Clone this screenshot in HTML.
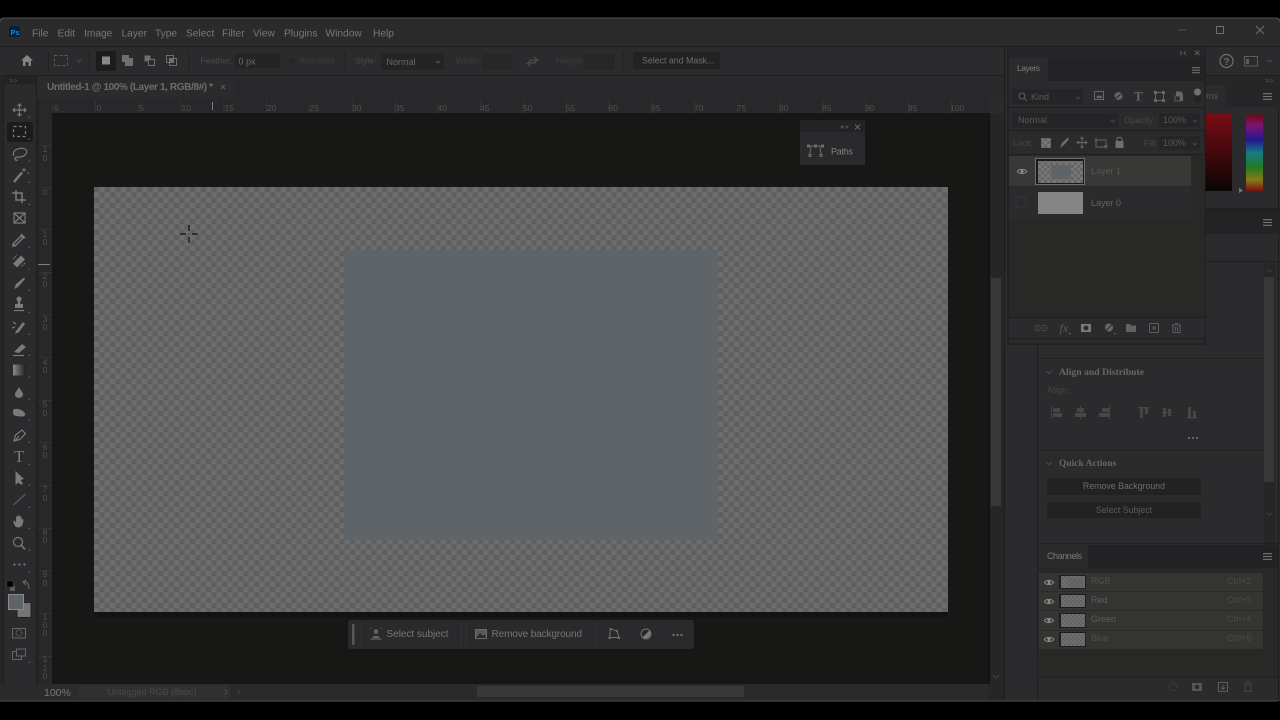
<!DOCTYPE html>
<html><head><meta charset="utf-8"><title>Photoshop</title>
<style>
html,body{margin:0;padding:0;background:#000;width:1280px;height:720px;overflow:hidden}
svg{display:block;filter:blur(.35px)}
text{font-family:"Liberation Sans",sans-serif;font-size:10px;fill:#7f7f7f}
.m{font-size:10.2px;fill:#787878}
.r{fill:#505050;font-size:8.5px}
.i{fill:none;stroke:#7a7a7a;stroke-width:1.2}
.f{fill:#7a7a7a}
</style></head><body>
<svg width="1280" height="720" viewBox="0 0 1280 720" xmlns="http://www.w3.org/2000/svg">
<defs>
<pattern id="ck" width="10.667" height="10.667" patternUnits="userSpaceOnUse" x="94" y="187"><rect width="10.667" height="10.667" fill="#6d6d6d"/><rect width="5.333" height="5.333" fill="#5f5f5f"/><rect x="5.333" y="5.333" width="5.333" height="5.333" fill="#5f5f5f"/></pattern>
<pattern id="ck2" width="6" height="6" patternUnits="userSpaceOnUse"><rect width="6" height="6" fill="#777"/><rect width="3" height="3" fill="#666"/><rect x="3" y="3" width="3" height="3" fill="#666"/></pattern>
<pattern id="ck3" width="4" height="4" patternUnits="userSpaceOnUse"><rect width="4" height="4" fill="#6f6f6f"/><rect width="2" height="2" fill="#636363"/><rect x="2" y="2" width="2" height="2" fill="#636363"/></pattern>
<linearGradient id="red" x1="0" y1="0" x2="0" y2="1"><stop offset="0" stop-color="#7a0c14"/><stop offset="1" stop-color="#0a0505"/></linearGradient>
<linearGradient id="hue" x1="0" y1="0" x2="0" y2="1"><stop offset="0" stop-color="#700a12"/><stop offset=".15" stop-color="#7a1478"/><stop offset=".33" stop-color="#22188a"/><stop offset=".5" stop-color="#1a7a88"/><stop offset=".68" stop-color="#1f7a22"/><stop offset=".85" stop-color="#8a7a18"/><stop offset="1" stop-color="#760c10"/></linearGradient>
<linearGradient id="gr" x1="0" y1="0" x2="1" y2="0"><stop offset="0" stop-color="#8a8a8a"/><stop offset="1" stop-color="#1d1d1d"/></linearGradient>
<symbol id="eye" viewBox="0 0 12 8" overflow="visible"><path d="M.5 4C3 .8 9 .8 11.500 4 9 7.200 3 7.200 .5 4Z" fill="none" stroke="#8a8a8a" stroke-width="1.1"/><circle cx="6" cy="4" r="1.800" fill="#8a8a8a"/></symbol>
<symbol id="ham" viewBox="0 0 9 7" overflow="visible"><path d="M0 .7H9M0 3.500H9M0 6.300H9" stroke="#777" stroke-width="1.100"/></symbol>
</defs>
<rect width="1280" height="720" fill="#000"/>
<rect x="0" y="18" width="1280" height="684" rx="4" fill="#2b2b2d"/>
<path d="M0 22Q0 18 4 18H1276Q1280 18 1280 22" fill="none" stroke="#505052"/>

<!-- title bar -->
<rect x="9" y="26" width="11" height="11" rx="2" fill="#06203c"/><text x="10.500" y="35" style="font-size:7.500px;font-weight:bold;fill:#2f7fd0">Ps</text>
<text class="m" x="32" y="36.500">File</text><text class="m" x="57.500" y="36.500">Edit</text><text class="m" x="84" y="36.500">Image</text><text class="m" x="121.500" y="36.500">Layer</text><text class="m" x="155" y="36.500">Type</text><text class="m" x="186" y="36.500">Select</text><text class="m" x="222" y="36.500">Filter</text><text class="m" x="253" y="36.500">View</text><text class="m" x="284" y="36.500">Plugins</text><text class="m" x="325.500" y="36.500">Window</text><text class="m" x="373" y="36.500">Help</text>
<path d="M1178 30H1186" stroke="#4f4f4f" stroke-width="1"/><rect x="1216.500" y="26.500" width="7" height="7" fill="none" stroke="#6e6e6e"/><path d="M1256 26L1264 34M1264 26L1256 34" stroke="#6e6e6e"/>
<path d="M0 46.500H1280" stroke="#1e1e1f"/>
<path d="M0 75.500H1280" stroke="#1e1e1f"/>

<!-- options bar -->
<path d="M27 55L21 60.500H23V66H25.500V62H28.500V66H31V60.500H33Z" fill="#848484"/>
<path d="M48.500 52V71M89 52V71M189 52V71M345 52V71M623 52V71" stroke="#202021"/>
<rect x="54.500" y="55.500" width="13" height="10" fill="none" stroke="#5a5a5a" stroke-dasharray="3 2"/>
<path d="M77 60L79 62L81 60" fill="none" stroke="#4f4f4f"/>
<rect x="96" y="51" width="20" height="20" rx="1" fill="#1c1c1d"/><rect x="102" y="56.500" width="8" height="8" fill="#888"/>
<path d="M122 55H129V58H133V66H125V62H122Z" fill="#6f6f6f"/>
<rect x="144.500" y="55.500" width="6" height="6" fill="#6f6f6f"/><rect x="148.500" y="59.500" width="6" height="6" fill="#2b2b2d" stroke="#6f6f6f"/>
<rect x="166.500" y="55.500" width="7" height="7" fill="none" stroke="#6f6f6f"/><rect x="169.500" y="58.500" width="7" height="7" fill="none" stroke="#6f6f6f"/><rect x="170" y="59" width="3" height="3" fill="#6f6f6f"/>
<text x="200.500" y="63.500" style="font-size:8.500px;fill:#4a4a4a">Feather:</text>
<rect x="235" y="54" width="45" height="14" fill="#242425"/><text x="238.500" y="64.500" style="font-size:9px;fill:#6e6e6e">0 px</text>
<rect x="289" y="58" width="6" height="6" fill="#262627"/><text x="299.500" y="63.500" style="font-size:8.500px;fill:#3c3c3c">Anti-alias</text>
<text x="355" y="63.500" style="font-size:8.500px;fill:#4a4a4a">Style:</text>
<rect x="381" y="53" width="63" height="17" fill="#242425"/><text x="386.500" y="65" style="font-size:9px;fill:#686868">Normal</text><path d="M436 61L438 63L440 61" fill="none" stroke="#565656"/>
<text x="455.500" y="63.500" style="font-size:8.500px;fill:#3c3c3c">Width:</text><rect x="483.500" y="54.500" width="28" height="14" fill="#272728" stroke="#242422"/>
<path d="M529 60H537M534 57L538 60L534 62M536 63H528M531 61L527 63.500L531 66" fill="none" stroke="#484848" stroke-width="1.300"/>
<text x="556" y="63.500" style="font-size:8.500px;fill:#3c3c3c">Height:</text><rect x="585.500" y="54.500" width="28" height="14" fill="#272728" stroke="#242422"/>
<rect x="633" y="52" width="87" height="17" fill="#222223"/><text x="642" y="63.500" style="font-size:8.800px;fill:#6e6e6e">Select and Mask...</text>

<!-- tab row -->
<rect x="38" y="76" width="970" height="22" fill="#29292b"/>
<rect x="38" y="76" width="196" height="22" fill="#2b2b2d"/>
<text x="47" y="90" style="font-size:10px;font-weight:bold;fill:#6c6c6c" textLength="166">Untitled-1 @ 100% (Layer 1, RGB/8#) *</text>
<path d="M221 85L225 89M225 85L221 89" stroke="#5a5a5a"/>
<rect x="4" y="76" width="32" height="8" fill="#232324"/>
<text x="9" y="83" style="font-size:7px;fill:#555">&gt;&gt;</text>

<!-- rulers -->
<rect x="38" y="98" width="950" height="15" fill="#28282a"/>
<rect x="38" y="98" width="14" height="586" fill="#28282a"/>
<path d="M38 98V684" stroke="#1e1e1f"/>
<path d="M52 112H988" stroke="#464646" stroke-dasharray="1 7.540"/>
<path d="M52.500 104V113M95.500 100V113M138.300 100V113M181 100V113M223.800 100V113M266.600 100V113M309.400 100V113M352.200 100V113M395 100V113M437.800 100V113M480.600 100V113M523.400 100V113M566.200 100V113M609 100V113M651.800 100V113M694.600 100V113M737.400 100V113M780.200 100V113M823 100V113M865.800 100V113M908.600 100V113M951.400 100V113" stroke="#333335"/>
<text class="r" x="54" y="111">5</text><text class="r" x="96.500" y="111">0</text><text class="r" x="139" y="111">5</text><text class="r" x="181.500" y="111">10</text><text class="r" x="224.500" y="111">15</text><text class="r" x="267" y="111">20</text><text class="r" x="309.500" y="111">25</text><text class="r" x="352" y="111">30</text><text class="r" x="395" y="111">35</text><text class="r" x="437.500" y="111">40</text><text class="r" x="480" y="111">45</text><text class="r" x="523" y="111">50</text><text class="r" x="565.500" y="111">55</text><text class="r" x="608.500" y="111">60</text><text class="r" x="651" y="111">65</text><text class="r" x="694" y="111">70</text><text class="r" x="737" y="111">75</text><text class="r" x="779" y="111">80</text><text class="r" x="822" y="111">85</text><text class="r" x="865" y="111">90</text><text class="r" x="908" y="111">95</text><text class="r" x="950" y="111">100</text>
<path d="M212.500 102V110" stroke="#7d7d7d"/>
<path d="M38 264.500H50" stroke="#7d7d7d"/>
<path d="M38 145.500H52M38 187.500H52M38 229.500H52M38 272.500H52M38 314.500H52M38 357.500H52M38 400.500H52M38 442.500H52M38 485.500H52M38 528.500H52M38 570.500H52M38 613.500H52M38 656.500H52" stroke="#333335"/>
<g text-anchor="middle">
<text class="r" x="45" y="152">1</text><text class="r" x="45" y="161">0</text>
<text class="r" x="45" y="195">0</text>
<text class="r" x="45" y="237">1</text><text class="r" x="45" y="245">0</text>
<text class="r" x="45" y="279">2</text><text class="r" x="45" y="287">0</text>
<text class="r" x="45" y="322">3</text><text class="r" x="45" y="330">0</text>
<text class="r" x="45" y="365">4</text><text class="r" x="45" y="373">0</text>
<text class="r" x="45" y="407">5</text><text class="r" x="45" y="416">0</text>
<text class="r" x="45" y="450">6</text><text class="r" x="45" y="458">0</text>
<text class="r" x="45" y="492">7</text><text class="r" x="45" y="501">0</text>
<text class="r" x="45" y="535">8</text><text class="r" x="45" y="543">0</text>
<text class="r" x="45" y="577">9</text><text class="r" x="45" y="586">0</text>
<text class="r" x="45" y="620">1</text><text class="r" x="45" y="628">0</text><text class="r" x="45" y="636">0</text>
<text class="r" x="45" y="662">1</text><text class="r" x="45" y="671">1</text><text class="r" x="45" y="679">0</text>
</g>

<!-- canvas -->
<rect x="52" y="113" width="936" height="571" fill="#171715"/>
<rect x="94" y="187" width="854" height="425" fill="url(#ck)"/>
<rect x="344" y="250" width="374" height="290" fill="#5f6468"/>
<rect x="94" y="612" width="854" height="5" fill="#121214"/>
<!-- cursor -->
<path d="M189 225V231M189 237V243M180 234H186M192 234H198" stroke="#111" stroke-width="1.200"/><rect x="188.500" y="233.500" width="1" height="1" fill="#222"/>

<!-- contextual task bar -->
<rect x="348" y="620" width="346" height="29" rx="3" fill="#2a2a2d"/>
<rect x="352" y="624" width="2.500" height="21" rx="1" fill="#585858"/>
<path d="M361 622V646M461 622V646M466 622V646M596 622V646" stroke="#343437"/>
<circle cx="376" cy="631.500" r="2.300" fill="#666"/><path d="M372 638.500C372 635 380 635 380 638.500Z" fill="#666"/><path d="M371 629V628H372M381 629V628H380M371 638V639.500H381V638" fill="none" stroke="#5c5c5c" stroke-width=".7"/>
<text x="386.500" y="637" style="font-size:10px;fill:#767676" textLength="62">Select subject</text>
<rect x="475.500" y="629.500" width="11" height="9" fill="#5a5a5a" stroke="#6a6a6a"/><path d="M476 638L480 633L483 636L485 634L486 638Z" fill="#2a2a2d"/>
<text x="491.500" y="637" style="font-size:10px;fill:#767676" textLength="90.500">Remove background</text>
<path d="M610.500 629L617 631L619 637.500L609.500 637.500Z" fill="none" stroke="#6e6e6e"/><g fill="#6e6e6e"><rect x="609.500" y="628" width="2" height="2"/><rect x="616" y="630" width="2" height="2"/><rect x="608.500" y="637" width="2" height="2"/><rect x="618" y="637" width="2" height="2"/></g>
<circle cx="646" cy="634" r="5" fill="#2a2a2d" stroke="#6e6e6e"/><path d="M642.500 637.500L649.500 630.500A5 5 0 0 1 642.500 637.500Z" fill="#7a7a7a"/>
<circle cx="673.500" cy="635" r="1.200" fill="#6e6e6e"/><circle cx="677.500" cy="635" r="1.200" fill="#6e6e6e"/><circle cx="681.500" cy="635" r="1.200" fill="#6e6e6e"/>

<!-- paths mini panel -->
<rect x="800" y="120" width="65" height="45" fill="#2a2a2c"/><rect x="800" y="120" width="65" height="12" fill="#232325"/>
<path d="M841 127H845M843 125.500L841 127L843 128.500M846 125.500L848 127L846 128.500" fill="none" stroke="#666" stroke-width=".8" opacity=".8"/>
<path d="M855 124.500L860 129.500M860 124.500L855 129.500" stroke="#666"/>
<path d="M808.500 146H822.500M811 147L809.500 155M820 147L821 155" fill="none" stroke="#6c6c6c"/><rect x="807" y="144.500" width="3" height="3" fill="#6c6c6c"/><rect x="814" y="144.500" width="3" height="3" fill="#6c6c6c"/><rect x="821" y="144.500" width="3" height="3" fill="#6c6c6c"/><rect x="809" y="154.500" width="2" height="2" fill="none" stroke="#6c6c6c"/><rect x="820" y="154.500" width="2" height="2" fill="none" stroke="#6c6c6c"/>
<text x="831" y="154.500" style="font-size:9px;fill:#808080" textLength="22">Paths</text>

<!-- tool bar -->
<rect x="0" y="75" width="4" height="627" fill="#262627"/>
<path d="M3.500 78V700M36.500 76V684" stroke="#1f1f20"/>
<rect x="7" y="122" width="26" height="20" rx="1" fill="#1c1c1d"/>
<path d="M13 110H26M19.500 104V116M17.500 106L19.500 104L21.500 106M17.500 114L19.500 116L21.500 114M15 108L13 110L15 112M24 108L26 110L24 112" class="i"/>
<rect x="13.500" y="126.500" width="12" height="10" style="stroke-dasharray:3 2.500" class="i"/>
<path d="M14 156C11 150 20 147 25 149C29 151 26 157 19 157C17 157 15 157 15 159C15 161 17 160 18 160" class="i"/>
<path d="M14 182L22 172.500" class="i" style="stroke-width:2.500"/><path d="M24 168V172M22 170H26M27 173H29" class="i" style="stroke-width:.9"/>
<path d="M16 190V200H26M12 193H22V203" class="i" style="stroke-width:1.500"/>
<path d="M14 213H25V223H14ZM14 213L25 223M25 213L14 223" class="i"/>
<path d="M14 245L13 246V244L21 236L23 238L15 246ZM21 234L25 238" class="i" style="stroke-width:1.400"/>
<path d="M15 265.500L23 257.500" class="i" style="stroke-width:5.500"/><path d="M13 259L17 255M25 263L21 267" class="i" style="stroke-dasharray:1.500 1"/>
<path d="M14 289L16 284L24 277.500L25 279L18 287Z" class="f"/>
<path d="M19 299V304" class="i" style="stroke-width:2.500"/><path d="M15 304H23V308H15Z" class="f"/><path d="M14 310.500H24" class="i"/><circle cx="19" cy="299" r="2.500" class="f"/>
<path d="M16 331L23 322L25 324L19 332L15 334Z" class="f"/><path d="M13 322L16 324M12 328L15 327" class="i"/>
<path d="M14 352L22 344L26 347L19 353Z" class="f"/><path d="M13 355.500H24" class="i"/>
<rect x="13" y="364.500" width="13" height="11" fill="url(#gr)"/>
<path d="M19 387C21 391 23 392 23 394.500C23 399 15 399 15 394.500C15 392 17 391 19 387Z" class="f"/>
<path d="M13 411C13 408 20 408 24 412C27 415 24 417 21 416.500L16 416C13 415.500 13 413 13 411Z" class="f"/>
<path d="M14 441L15.500 435L22 430L25.500 433.500L20 439.500ZM15 441L19 436" class="i"/>
<text x="14" y="462" style="font-family:'Liberation Serif',serif;font-size:17px;fill:#7a7a7a">T</text>
<path d="M15.500 471V485L18.500 482.500L21 485L23 483.500L20.500 480L24 479Z" class="f"/>
<path d="M13.500 505L25.500 494" class="i" style="stroke:#5a5a5a"/>
<path d="M15 526C13.500 523 13 521 14 520.500C15 520.500 16 523 16 523V517.500C16 516 17.500 516 17.500 517.500V516C18 515 19.500 515 19.500 516V517C20.500 516 21.500 516 21.500 517.500V519.500C22.500 519 23.500 519 23.500 520L23 523C22.500 526 21 527 19 527.500C17 527.500 16 527 15 526Z" class="f"/>
<circle cx="18" cy="542" r="4.500" class="i"/><path d="M21.500 545.500L25 549.500" class="i" style="stroke-width:1.600"/>
<circle cx="14.500" cy="564.500" r="1.100" class="f"/><circle cx="19.500" cy="564.500" r="1.100" class="f"/><circle cx="24.500" cy="564.500" r="1.100" class="f"/>
<g fill="#5c5c5c"><path d="M30 116V118H28ZM30 138V140H28ZM30 160V162H28ZM30 181V183H28ZM30 203V205H28ZM30 246V248H28ZM30 268V270H28ZM30 289V291H28ZM30 311V313H28ZM30 333V335H28ZM30 354V356H28ZM30 376V378H28ZM30 398V400H28ZM30 419V421H28ZM30 441V443H28ZM30 463V465H28ZM30 484V486H28ZM30 506V508H28ZM30 527V529H28ZM30 549V551H28ZM30 571V573H28ZM30 661V663H28Z"/></g>
<rect x="10" y="586" width="5" height="5" fill="#5a5a5a"/><rect x="7" y="581" width="6" height="6" fill="#000" stroke="#444" stroke-width=".5"/>
<path d="M23 582C27 581 29 584 29 589M23 582L26 580M23 582L26 585" fill="none" stroke="#707070"/>
<rect x="17" y="602.500" width="14" height="15" fill="#747474" stroke="#222"/>
<rect x="8.500" y="594.500" width="15" height="15" fill="#5f6468" stroke="#8b8b8b"/>
<rect x="12.500" y="628.500" width="13" height="9.500" fill="none" stroke="#666"/><circle cx="19" cy="633" r="3" fill="none" stroke="#666" stroke-dasharray="1.500 1"/>
<rect x="12.500" y="651.500" width="9" height="8" fill="none" stroke="#666"/><rect x="16.500" y="649" width="9" height="7" fill="#2b2b2d" stroke="#666"/>

<!-- status bar -->
<rect x="0" y="684" width="1008" height="18" fill="#2b2b2d"/>
<text x="44" y="696" style="font-size:10.500px;fill:#7a7a7a">100%</text>
<rect x="78" y="685" width="152" height="14" fill="#303032"/>
<text x="107.500" y="695" style="font-size:9px;fill:#4a4a4a">Untagged RGB (8bpc)</text>
<path d="M224.500 689L227 692L224.500 695" fill="none" stroke="#4c4c4c"/>
<rect x="230" y="685" width="758" height="14" fill="#2a2a28"/>
<path d="M240 690L238 692L240 694" fill="none" stroke="#3f3f3f"/>
<rect x="477" y="686" width="267" height="11" fill="#383836"/>
<path d="M0 700.500H1280" stroke="#3a3a3a"/>

<!-- vertical scrollbar -->
<rect x="988" y="113" width="16" height="587" fill="#262624"/>
<rect x="988" y="113" width="2" height="571" fill="#131313"/>
<rect x="991" y="278" width="10" height="228" fill="#383836"/>
<path d="M993 675L996 678L999 675" fill="none" stroke="#444"/>
<path d="M1004.500 47V700" stroke="#1e1e1f"/>

<!-- dock right panels -->
<rect x="1005" y="47" width="275" height="653" fill="#2b2b2d"/>
<path d="M0 46.500H1280M1205 75.500H1280" stroke="#1e1e1f"/>
<path d="M1037.500 212V700M1278.500 75V700" stroke="#1e1e1f"/>
<path d="M1205 85.500H1280" stroke="#1f1f20"/>
<rect x="1205" y="76" width="75" height="9" fill="#262627"/>
<rect x="1205" y="85" width="75" height="22" fill="#262628"/>
<rect x="1205" y="85" width="20" height="22" fill="#2b2b2d"/><text x="1206" y="99" style="font-size:9px;fill:#5a5a5a">ms</text>
<use href="#ham" x="1263" y="93" width="9" height="7"/>
<text x="1265" y="83" style="font-size:7px;fill:#555">&gt;&gt;</text>
<rect x="1205" y="114" width="27" height="77" fill="url(#red)"/>
<rect x="1246" y="114.500" width="17" height="77" fill="url(#hue)"/>
<path d="M1239 188V193L1243 190.500Z" fill="#777"/>
<path d="M1205 208.500H1280" stroke="#1f1f20"/>
<rect x="1205" y="209" width="75" height="25" fill="#232325"/>
<use href="#ham" x="1263" y="219" width="9" height="7"/>
<path d="M1205 261.500H1280" stroke="#1f1f20"/>
<!-- properties -->
<rect x="1039" y="263" width="225" height="283" fill="#2b2b2d"/>
<rect x="1264" y="263" width="11" height="283" fill="#262624"/>
<rect x="1264" y="277" width="10" height="205" fill="#383836"/>
<path d="M1267 272L1269.500 270L1272 272M1267 513L1269.500 515.500L1272 513" fill="none" stroke="#404040"/>
<path d="M1039 358.500H1263M1039 450.500H1263M1039 543.500H1278" stroke="#202021"/>
<path d="M1046 371L1049 373.500L1052 371" fill="none" stroke="#4c4c4c"/>
<text x="1059" y="375" style="font-family:'Liberation Serif',serif;font-size:9.700px;font-weight:bold;fill:#666">Align and Distribute</text>
<text x="1047" y="393" style="font-size:9px;fill:#474747">Align:</text>
<g fill="#464646">
<rect x="1051" y="406" width="1" height="13"/><rect x="1053" y="408" width="7" height="4"/><rect x="1053" y="413" width="9" height="4"/>
<rect x="1080" y="406" width="1" height="13"/><rect x="1077" y="408" width="7" height="4"/><rect x="1075" y="413" width="11" height="4"/>
<rect x="1109" y="406" width="1" height="13"/><rect x="1102" y="408" width="7" height="4"/><rect x="1099" y="413" width="10" height="4"/>
<rect x="1138" y="407" width="11" height="1.500"/><rect x="1140" y="408" width="3" height="10"/><rect x="1145" y="408" width="3" height="6"/>
<rect x="1162" y="412" width="10" height="1"/><rect x="1163" y="408" width="3" height="9"/><rect x="1168" y="409" width="3" height="7"/>
<rect x="1187" y="417" width="10" height="1.500"/><rect x="1188" y="407" width="3" height="10"/><rect x="1193" y="411" width="3" height="6"/>
</g>
<circle cx="1189" cy="438" r="1" fill="#777"/><circle cx="1193" cy="438" r="1" fill="#777"/><circle cx="1197" cy="438" r="1" fill="#777"/>
<path d="M1046 462L1049 464.500L1052 462" fill="none" stroke="#4c4c4c"/>
<text x="1059" y="466" style="font-family:'Liberation Serif',serif;font-size:9.500px;font-weight:bold;fill:#666">Quick Actions</text>
<rect x="1047" y="478" width="154" height="17" fill="#222223"/><text x="1124" y="489" text-anchor="middle" style="font-size:8.800px;fill:#6e6e6e">Remove Background</text>
<rect x="1047" y="502" width="154" height="16" fill="#222223"/><text x="1124" y="513" text-anchor="middle" style="font-size:8.800px;fill:#5a5a5a">Select Subject</text>
<!-- channels -->
<rect x="1039" y="545" width="239" height="23" fill="#222224"/>
<rect x="1039" y="545" width="49" height="23" fill="#2b2b2d"/>
<text x="1047" y="559" style="font-size:9px;fill:#787878" textLength="35">Channels</text>
<use href="#ham" x="1263" y="553" width="9" height="7"/>
<rect x="1039" y="568" width="239" height="110" fill="#282826"/>
<rect x="1039" y="573" width="224" height="76" fill="#343432"/>
<path d="M1039 591.500H1263M1039 610.500H1263M1039 630.500H1263" stroke="#2a2a29"/>
<g fill="#1e1e1e"><rect x="1059" y="575" width="27" height="14"/><rect x="1059" y="594" width="27" height="14"/><rect x="1059" y="613" width="27" height="15"/><rect x="1059" y="632" width="27" height="15"/></g>
<rect x="1061" y="576" width="24" height="12" fill="url(#ck3)"/><rect x="1061" y="595" width="24" height="12" fill="url(#ck3)"/><rect x="1061" y="614" width="24" height="13" fill="url(#ck3)"/><rect x="1061" y="633" width="24" height="13" fill="url(#ck3)"/>
<rect x="1069" y="579" width="14" height="8" fill="#616568"/>
<use href="#eye" x="1043.500" y="579" width="11" height="7"/><use href="#eye" x="1043.500" y="598" width="11" height="7"/><use href="#eye" x="1043.500" y="617" width="11" height="7"/><use href="#eye" x="1043.500" y="636" width="11" height="7"/>
<text x="1091" y="584" style="font-size:9px;fill:#505050">RGB</text><text x="1091" y="603" style="font-size:9px;fill:#5c5c5c">Red</text><text x="1091" y="622" style="font-size:9px;fill:#5c5c5c">Green</text><text x="1091" y="641" style="font-size:9px;fill:#505050">Blue</text>
<text x="1227" y="584" style="font-size:9px;fill:#4a4a4a">Ctrl+2</text><text x="1227" y="603" style="font-size:9px;fill:#4a4a4a">Ctrl+3</text><text x="1227" y="622" style="font-size:9px;fill:#4a4a4a">Ctrl+4</text><text x="1227" y="641" style="font-size:9px;fill:#4a4a4a">Ctrl+5</text>
<rect x="1039" y="678" width="239" height="21" fill="#2b2b2d"/>
<path d="M1039 677.500H1278" stroke="#222"/>
<circle cx="1173" cy="687" r="4" fill="none" stroke="#474747" stroke-dasharray="1.500 1.500"/>
<rect x="1192" y="683" width="10" height="8" fill="#555"/><circle cx="1197" cy="687" r="2.200" fill="#2b2b2d"/>
<rect x="1218.500" y="682.500" width="9" height="9" fill="none" stroke="#5c5c5c"/><path d="M1223 684.500V689M1221 687.500L1223 689.500L1225 687.500" fill="none" stroke="#5c5c5c"/>
<path d="M1244 684H1252M1245 684.500V691.500H1251V684.500M1247 683V682H1249V683" fill="none" stroke="#444"/>

<!-- help row right -->
<circle cx="1226.500" cy="61" r="6.500" fill="none" stroke="#6e6e6e" stroke-width="1.200"/><text x="1223.500" y="65" style="font-size:10px;font-weight:bold;fill:#6e6e6e">?</text>
<rect x="1244.500" y="56.500" width="13" height="9.500" fill="none" stroke="#5e5e5e"/><rect x="1246" y="59" width="3" height="5" fill="#5e5e5e"/>
<path d="M1267 60L1269.500 62L1272 60" fill="none" stroke="#505050"/>

<!-- floating layers panel -->
<rect x="1008" y="47" width="197" height="297" fill="#2b2b2d" stroke="#1a1a1b"/>
<rect x="1008" y="47" width="197" height="11" fill="#262628"/>
<path d="M1180 51L1182 53L1180 55M1186 51L1184 53L1186 55" fill="none" stroke="#5a5a5a" stroke-width=".9" transform="rotate(180 1183 53)"/>
<path d="M1195 50.500L1199.500 55M1199.500 50.500L1195 55" stroke="#5e5e5e"/>
<rect x="1009" y="58" width="196" height="23" fill="#232325"/>
<rect x="1009" y="58" width="39" height="23" fill="#2b2b2d"/>
<text x="1017" y="71" style="font-size:8.500px;fill:#7c7c7c" textLength="23">Layers</text>
<use href="#ham" x="1192" y="67" width="8" height="6.500"/>
<path d="M1009 107.500H1205M1009 130.500H1205M1009 154.500H1205" stroke="#1f1f20"/>
<rect x="1012" y="89" width="71" height="15" fill="#252527"/>
<circle cx="1022" cy="96" r="3" fill="none" stroke="#5e5e5e"/><path d="M1024 98L1027 101" stroke="#5e5e5e"/>
<text x="1031" y="100" style="font-size:9px;fill:#5a5a5a">Kind</text><path d="M1076 97L1078 99L1080 97" fill="none" stroke="#4a4a4a"/>
<rect x="1094.500" y="91.500" width="9" height="8" fill="none" stroke="#666"/><path d="M1096 98L1098 95L1100 96.500L1102 95V98Z" fill="#666"/>
<circle cx="1118.500" cy="96" r="4" fill="#626262"/><path d="M1115.500 98.500L1121.500 93.500" stroke="#2b2b2d"/>
<text x="1134" y="100.500" style="font-family:'Liberation Serif',serif;font-size:13px;font-weight:bold;fill:#666">T</text>
<rect x="1155.500" y="92.500" width="8" height="8" fill="none" stroke="#666"/><g fill="#666"><rect x="1154" y="91" width="3" height="3"/><rect x="1162" y="91" width="3" height="3"/><rect x="1154" y="99" width="3" height="3"/><rect x="1162" y="99" width="3" height="3"/></g>
<path d="M1176 91.500H1181L1183 94V101H1176Z" fill="#666"/><rect x="1175" y="96" width="5" height="5" fill="#2b2b2d" stroke="#666" stroke-width=".8"/>
<circle cx="1197.500" cy="92" r="3.500" fill="#707070"/><rect x="1194" y="96" width="7" height="7" fill="#242424"/>
<rect x="1012" y="113" width="106" height="15" fill="#252527"/>
<text x="1018" y="123" style="font-size:9px;fill:#5a5a5a">Normal</text><path d="M1111 120L1113 122L1115 120" fill="none" stroke="#4a4a4a"/>
<text x="1124" y="123" style="font-size:8.500px;fill:#4a4a4a">Opacity:</text>
<rect x="1159" y="113" width="41" height="14" fill="#252527"/><text x="1163" y="123" style="font-size:9px;fill:#585858">100%</text><path d="M1193 120L1195 122L1197 120" fill="none" stroke="#4a4a4a"/>
<text x="1013" y="146" style="font-size:8.500px;fill:#4a4a4a">Lock:</text>
<rect x="1041.500" y="138.500" width="9" height="9" fill="url(#ck2)" stroke="#666"/>
<path d="M1060 148L1062 143L1068 137.500L1069 139L1064 145Z" fill="#6e6e6e"/>
<path d="M1082 137V148M1077 142.500H1087M1080.500 139L1082 137L1083.500 139M1080.500 146L1082 148L1083.500 146M1079 141L1077 142.500L1079 144M1085 141L1087 142.500L1085 144" fill="none" stroke="#666"/>
<path d="M1096 140H1106V147H1096ZM1094.500 140H1098M1096 138V142M1104 146H1108M1106 144V149" fill="none" stroke="#666"/>
<rect x="1115.500" y="141" width="8" height="7" fill="#6e6e6e"/><path d="M1117 141V139C1117 137 1122 137 1122 139V141" fill="none" stroke="#6e6e6e"/>
<text x="1144" y="146" style="font-size:8.500px;fill:#4a4a4a">Fill:</text>
<rect x="1159" y="136" width="41" height="14" fill="#252527"/><text x="1163" y="146" style="font-size:9px;fill:#585858">100%</text><path d="M1193 143L1195 145L1197 143" fill="none" stroke="#4a4a4a"/>
<!-- layer rows -->
<rect x="1009" y="155" width="196" height="162" fill="#282826"/>
<rect x="1009" y="156" width="182" height="30" fill="#383836"/>
<rect x="1009" y="187" width="182" height="31" fill="#2b2b2d"/>
<use href="#eye" x="1016.500" y="168" width="11" height="7"/>
<rect x="1016" y="197" width="10" height="10" fill="none" stroke="#343436"/>
<rect x="1035.500" y="158.500" width="49" height="26" fill="#1a1a1a" stroke="#6d6d6d"/>
<rect x="1038" y="161" width="45" height="22" fill="url(#ck2)"/>
<rect x="1051" y="165" width="20" height="14" fill="#5f6468"/>
<rect x="1038" y="192" width="45" height="22" fill="#858585"/>
<text x="1091" y="174" style="font-size:9px;fill:#555">Layer 1</text>
<text x="1091" y="206" style="font-size:9px;fill:#636363">Layer 0</text>
<!-- layers footer -->
<rect x="1009" y="318" width="196" height="21" fill="#2b2b2d"/>
<path d="M1009 317.500H1205M1009 338.500H1205" stroke="#1e1e1f"/>
<path d="M1040 325.500H1037C1034 325.500 1034 330.500 1037 330.500H1040M1042 325.500H1045C1048 325.500 1048 330.500 1045 330.500H1042M1037 328H1045" fill="none" stroke="#484848"/>
<text x="1059.500" y="332" style="font-family:'Liberation Serif',serif;font-style:italic;font-size:12px;fill:#5a5a5a">fx</text><path d="M1069 333L1070 334.500L1071 333Z" fill="#777"/>
<rect x="1081" y="324" width="10" height="8" fill="#7a7a7a"/><circle cx="1086" cy="328" r="2.500" fill="#2b2b2d"/>
<circle cx="1109" cy="327.500" r="4" fill="#686868"/><path d="M1106 330.500L1112 324.500" stroke="#2b2b2d"/><path d="M1114 333L1115 334.500L1116 333Z" fill="#777"/>
<path d="M1126 324H1130L1131 325.500H1136V332H1126Z" fill="#626262"/>
<rect x="1149.500" y="323.500" width="9" height="9" rx="1" fill="none" stroke="#5e5e5e"/><path d="M1152 328H1156M1154 326V330" stroke="#5e5e5e"/>
<path d="M1172 325H1181M1173 325.500V332.500H1180V325.500M1175 323.500H1178M1175.500 327V331M1177.500 327V331" fill="none" stroke="#5e5e5e"/>
</svg>
</body></html>
